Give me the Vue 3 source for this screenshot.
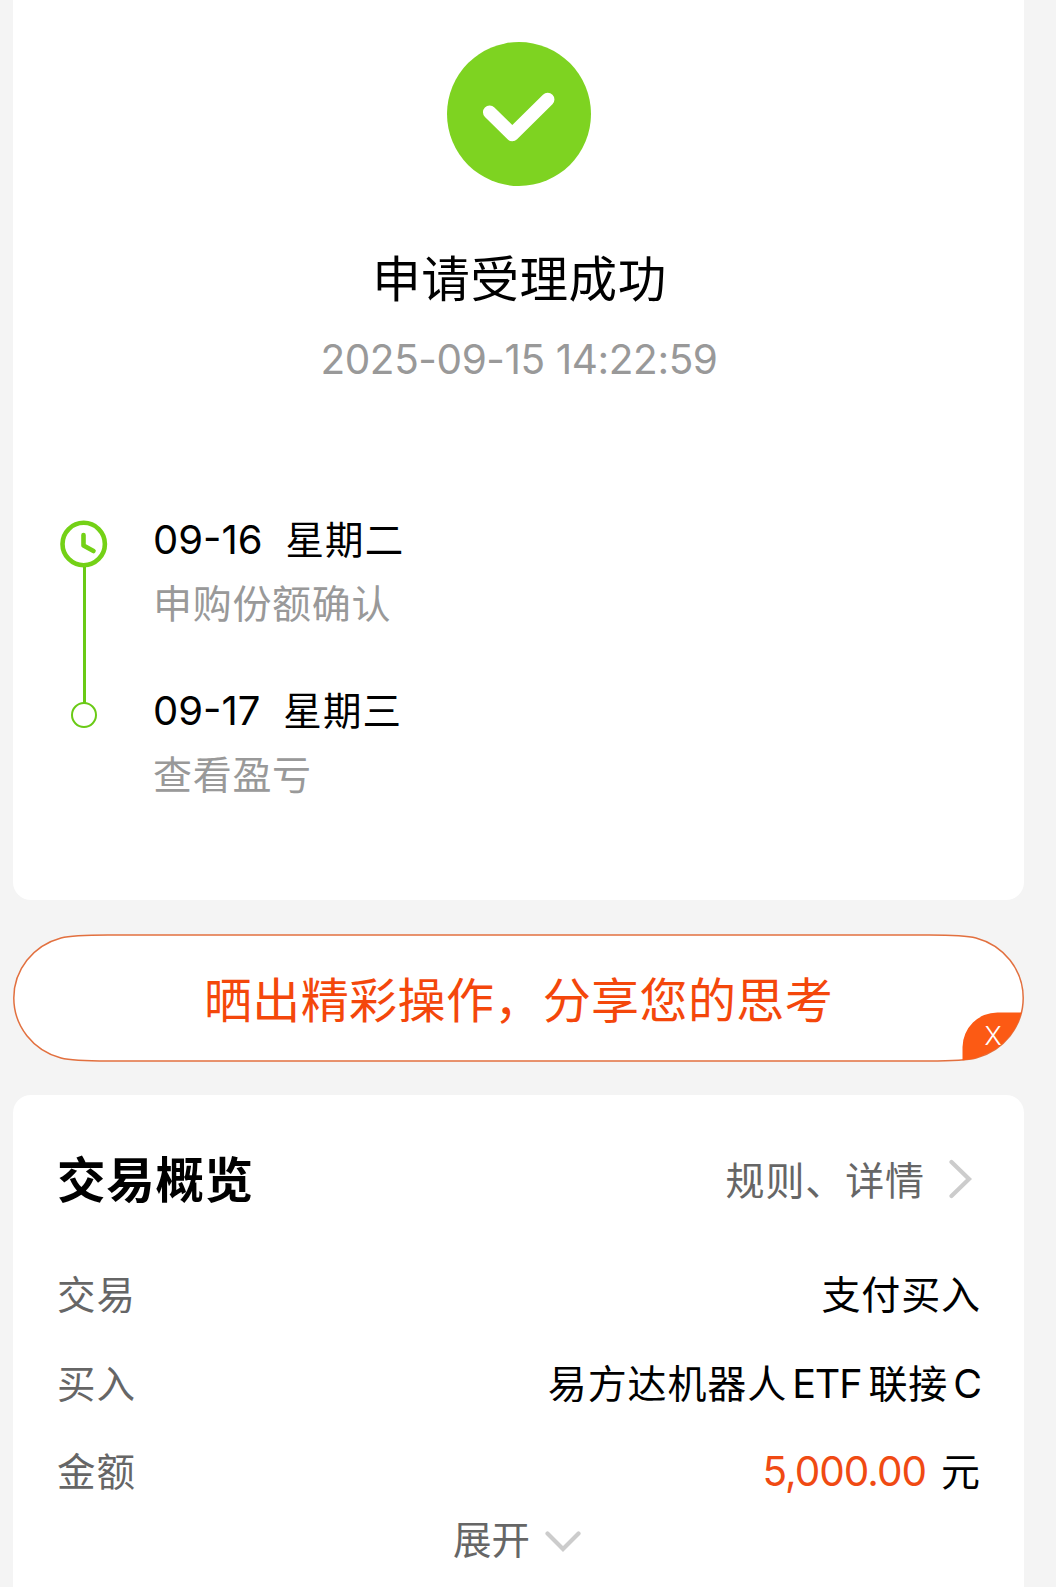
<script setup>
import { ref } from "vue";

// data
const steps = [
  { id: 1, date: "09-16", weekday: "星期二", text: "申购份额确认" },
  { id: 2, date: "09-17", weekday: "星期三", text: "查看盈亏" },
];
const showShare = ref(true);

// outline of the share button, shared by the border and the corner clip
const pill =
  "M95 1H916C941 1 953 1.3 963 4C991 11.5 1010.2 36 1010.2 64S991 116.5 963 124C953 126.7 941 127 916 127H95C70 127 58 126.7 48 124C20 116.5 .8 92 .8 64S20 11.5 48 4C58 1.3 70 1 95 1Z";
</script>

<template>
  <main class="page">
    <section class="card result">
      <svg class="result__icon" viewBox="0 0 144 144">
        <circle cx="72" cy="72" r="72" fill="#7ed321" />
        <path
          d="M42.7 70.3 65.3 92.5 100.7 57.5"
          fill="none"
          stroke="#fff"
          stroke-width="13.5"
          stroke-linecap="round"
          stroke-linejoin="round"
        />
      </svg>
      <h1 class="result__title">申请受理成功</h1>
      <time class="result__time">2025-09-15 14:22:59</time>

      <ol class="steps">
        <li v-for="(step, index) in steps" :key="step.id" class="step">
          <div class="step__marker">
            <svg v-if="index === 0" class="step__clock" viewBox="0 0 48 48">
              <circle cx="23.7" cy="24" r="21.2" />
              <path d="M23.5 15v10.5l10 5.5" />
            </svg>
            <span v-else class="step__dot"></span>
            <span v-if="index < steps.length - 1" class="step__line"></span>
          </div>
          <div class="step__body">
            <div class="step__head">
              <span class="step__date">{{ step.date }}</span>
              <span class="step__weekday">{{ step.weekday }}</span>
            </div>
            <div class="step__text">{{ step.text }}</div>
          </div>
        </li>
      </ol>
    </section>

    <div v-if="showShare" class="share">
      <svg class="share__shape" viewBox="0 0 1011 128">
        <defs>
          <clipPath id="pill">
            <path :d="pill" />
          </clipPath>
        </defs>
        <path :d="pill" fill="#fff" stroke="#e2703f" stroke-width="1.5" />
        <path
          d="M949.5 128V113A35 35 0 0 1 984.5 78.5H1011V128Z"
          fill="#fc5a14"
          clip-path="url(#pill)"
        />
      </svg>
      <span class="share__text">晒出精彩操作，分享您的思考</span>
      <button class="share__close" type="button" @click="showShare = false">
        X
      </button>
    </div>

    <section class="card overview">
      <header class="overview__header">
        <h2 class="overview__title">交易概览</h2>
        <a class="overview__link">
          规则、详情
          <svg class="overview__arrow" viewBox="0 0 24 40">
            <path d="M2.5 3 20 20 2.5 37" />
          </svg>
        </a>
      </header>
      <dl class="rows">
        <div class="row">
          <dt>交易</dt>
          <dd>支付买入</dd>
        </div>
        <div class="row">
          <dt>买入</dt>
          <dd>
            易方达机器人<span class="row__latin">ETF</span>联接<span
              class="row__latin row__latin--last"
              >C</span
            >
          </dd>
        </div>
        <div class="row">
          <dt>金额</dt>
          <dd><span class="row__amount">5,000.00</span>元</dd>
        </div>
      </dl>
      <div class="more">
        展开
        <svg class="more__arrow" viewBox="0 0 36 24">
          <path d="M2.5 3.5 18 19 33.5 3.5" />
        </svg>
      </div>
    </section>
  </main>
</template>

<style>
body {
  background: #f4f4f4;
}
</style>

<style scoped>
.page {
  box-sizing: border-box;
  height: 1587px;
  padding: 0 32px 0 13px;
  overflow: hidden;
  background: #f4f4f4;
  color: #000;
  font-family: Inter, "Noto Sans CJK SC", sans-serif;
}

.card {
  box-sizing: border-box;
  background: #fff;
}

.result {
  display: flex;
  flex-direction: column;
  align-items: center;
  height: 900px;
  padding-top: 42px;
  border-radius: 0 0 18px 18px;
}

.result__icon {
  width: 144px;
  height: 144px;
}

.result__title {
  margin: 64px 0 0 2px;
  font-size: 48.5px;
  font-weight: 400;
  line-height: 60px;
  letter-spacing: 0.6px;
}

.result__time {
  margin: 25px 0 0 1px;
  color: #999;
  font-size: 40.5px;
  line-height: 50px;
  letter-spacing: -0.42px;
}

.steps {
  align-self: stretch;
  margin: 129px 0 0;
  padding: 0 0 0 47px;
  list-style: none;
}

.step {
  display: flex;
  height: 171px;
}

.step__marker {
  display: flex;
  flex-direction: column;
  align-items: center;
  width: 48px;
  padding-top: 6px;
}

.step__clock {
  flex: none;
  width: 48px;
  height: 48px;
  fill: none;
  stroke: #74d116;
  stroke-width: 4.6;
  stroke-linecap: round;
  stroke-linejoin: round;
}

.step__dot {
  box-sizing: border-box;
  width: 26px;
  height: 26px;
  margin-top: 11px;
  border: 2.5px solid #6aca16;
  border-radius: 50%;
}

.step__line {
  flex: 1;
  width: 3px;
  margin: -1px 0 -18px;
  background: #6aca16;
}

.step__body {
  padding: 1px 0 0 45px;
}

.step__head {
  display: flex;
  font-size: 40px;
  line-height: 50px;
}

.step__weekday {
  margin-left: 23px;
  font-size: 38.5px;
  letter-spacing: 1.1px;
}

.step__text {
  margin-top: 19px;
  color: #999;
  font-size: 39px;
  line-height: 40px;
  letter-spacing: 0.7px;
}

.share {
  position: relative;
  display: flex;
  justify-content: center;
  height: 128px;
  margin: 34px 0 33px;
}

.share__shape {
  position: absolute;
  inset: 0;
  width: 1011px;
  height: 128px;
}

.share__text {
  position: relative;
  color: #f4470b;
  font-size: 48px;
  line-height: 133px;
  letter-spacing: 0.4px;
}

.share__close {
  position: absolute;
  right: 17px;
  bottom: 12px;
  width: 28px;
  height: 28px;
  padding: 0;
  border: 0;
  background: none;
  color: #fff;
  font-family: inherit;
  font-size: 26px;
  font-weight: 300;
  line-height: 28px;
}

.overview {
  height: 520px;
  padding: 55px 43px 0 44px;
  border-radius: 18px 18px 0 0;
}

.overview__header {
  display: flex;
  align-items: center;
  justify-content: space-between;
  height: 62px;
}

.overview__title {
  margin: 0;
  font-size: 48.5px;
  font-weight: 700;
  line-height: 62px;
  letter-spacing: 0.7px;
}

.overview__link {
  display: flex;
  align-items: center;
  padding-right: 8px;
  color: #666;
  font-size: 39px;
  line-height: 62px;
  letter-spacing: 0.9px;
}

.overview__arrow {
  width: 24px;
  height: 40px;
  margin: -4px 0 0 24px;
}

.overview__arrow,
.more__arrow {
  fill: none;
  stroke: #ccc;
  stroke-width: 4.2;
  stroke-linecap: round;
}

.rows {
  margin: 39px 0 0;
}

.row {
  display: flex;
  justify-content: space-between;
  height: 88.5px;
  font-size: 38.5px;
  line-height: 88.5px;
  letter-spacing: 0.9px;
}

.row dt {
  color: #666;
}

.row dd {
  margin: 0;
  font-size: 39px;
}

.row__latin {
  margin: 0 7px 0 5px;
  font-size: 39.5px;
  letter-spacing: -1.1px;
}

.row__latin--last {
  margin-right: 0;
}

.row__amount {
  margin-right: 15px;
  color: #f04a13;
  font-size: 40.5px;
  letter-spacing: -1px;
}

.more {
  display: flex;
  align-items: center;
  justify-content: center;
  height: 48px;
  margin: -1px 4px 0 0;
  color: #666;
  font-size: 38.5px;
  line-height: 48px;
}

.more__arrow {
  width: 36px;
  height: 24px;
  margin: 5px 0 0 15px;
}
</style>
